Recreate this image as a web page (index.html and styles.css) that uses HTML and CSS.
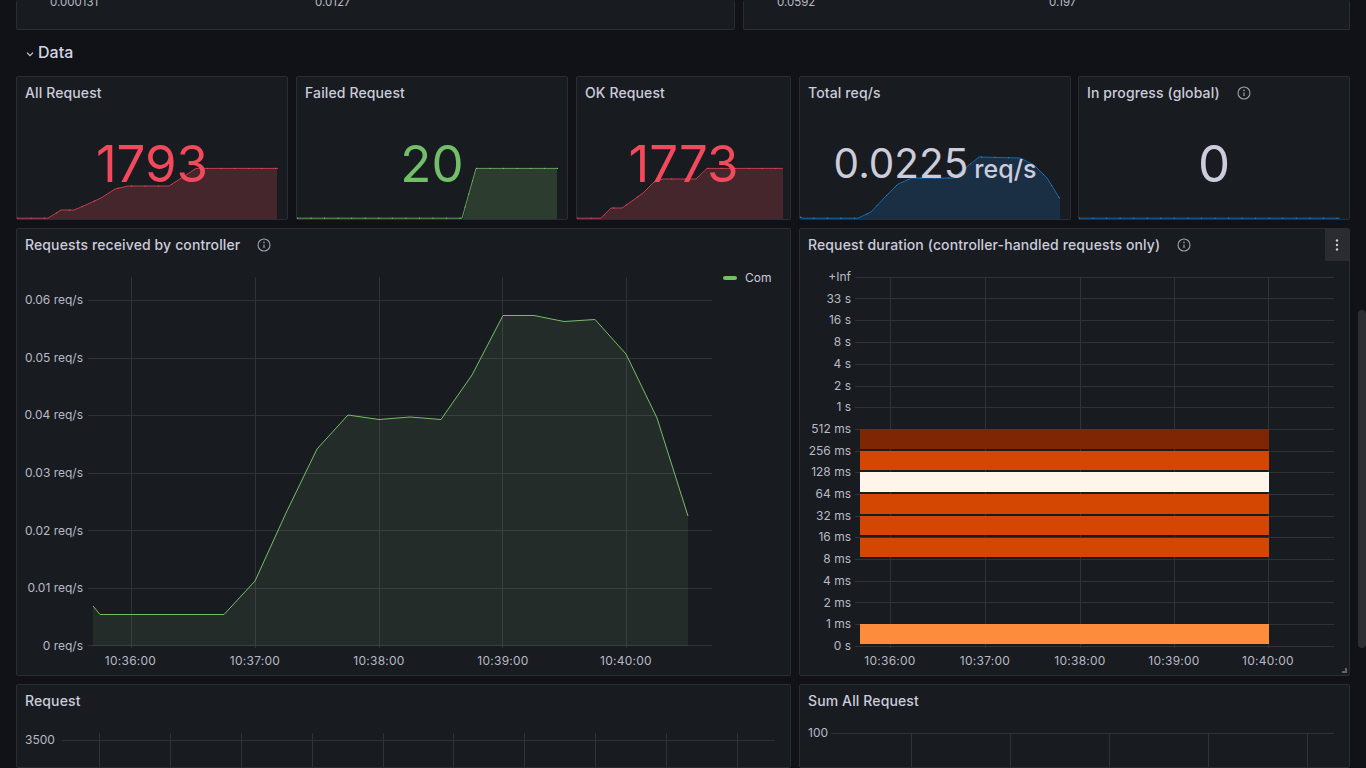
FILE: index.html
```html
<!DOCTYPE html>
<html lang="en">
<head>
<meta charset="utf-8">
<title>Grafana dashboard</title>
<link rel="stylesheet" href="styles.css">
</head>
<body>
<main class="dash">
  <div class="row row-top">
    <section class="panel clip"><span class="v v1">0.000131</span><span class="v v2">0.0127</span></section>
    <section class="panel clip"><span class="v v3">0.0592</span><span class="v v4">0.197</span></section>
  </div>
  <h2 class="section"><svg class="chev" viewBox="0 0 10 10"><path d="M2 3.6 5 6.6 8 3.6" fill="none" stroke="#ccccdc" stroke-width="1.2"/></svg>Data</h2>
  <div class="row row-stat">
    <section class="panel">
      <svg class="spark" viewBox="16 76 272 144"><path class="f-red" d="M17 219V218.200H48L61 210H74L88 204 101 198 115 189 128 186H169L183 177 196 168.400H277V219Z"/><path class="l-red" d="M17 218.200H48L61 210H74L88 204 101 198 115 189 128 186H169L183 177 196 168.400H278"/><path class="dots d-red" d="M17 218.200H48L61 210H74L88 204 101 198 115 189 128 186H169L183 177 196 168.400H278"/></svg>
      <h3 class="title">All Request</h3>
      <div class="big red">1793</div>
    </section>
    <section class="panel">
      <svg class="spark" viewBox="296 76 272 144"><path class="f-green" d="M463 219 476 168.400H557V219Z"/><path class="l-green" d="M297 218.200H462L476 168.400H558"/><path class="dots d-green" d="M297 218.200H462L476 168.400H558"/></svg>
      <h3 class="title">Failed Request</h3>
      <div class="big green">20</div>
    </section>
    <section class="panel">
      <svg class="spark" viewBox="576 76 215 144"><path class="f-red" d="M577 219V218.200H601L611 208H622L632 201 643 193 654 182 663 179H696L707 168.400H783V219Z"/><path class="l-red" d="M577 218.200H601L611 208H622L632 201 643 193 654 182 663 179H696L707 168.400H783"/><path class="dots d-red" d="M577 218.200H601L611 208H622L632 201 643 193 654 182 663 179H696L707 168.400H783"/></svg>
      <h3 class="title">OK Request</h3>
      <div class="big red">1773</div>
    </section>
    <section class="panel">
      <svg class="spark" viewBox="799 76 272 144"><path class="f-blue" d="M800 219V217L803 218.200H858L871 212 885 197 898 184 912 178H953L979 157 1020 158 1034 165 1047 178 1060 199V219Z"/><path class="l-blue" d="M800 217 803 218.200H858L871 212 885 197 898 184 912 178H953L979 157 1020 158 1034 165 1047 178 1060 199"/><path class="dots d-blue" d="M800 217 803 218.200H858L871 212 885 197 898 184 912 178H953L979 157 1020 158 1034 165 1047 178 1060 199"/></svg>
      <h3 class="title">Total req/s</h3>
      <div class="big grey mid">0.0225<span class="unit">req/s</span></div>
    </section>
    <section class="panel">
      <svg class="spark" viewBox="1078 76 272 144"><path class="l-blue" d="M1079 218.200H1340"/><path class="dots d-blue" d="M1079 218.200H1340"/></svg>
      <h3 class="title">In progress (global)<svg class="info" viewBox="0 0 14 14"><circle cx="7" cy="7" r="6" fill="none" stroke="#9fa0ac" stroke-width="1.1"/><circle cx="7" cy="4.4" r=".8" fill="#9fa0ac"/><path d="M7 6.5V10" stroke="#9fa0ac" stroke-width="1.2"/></svg></h3>
      <div class="big grey">0</div>
    </section>
  </div>
  <div class="row row-main">
    <section class="panel">
      <h3 class="title">Requests received by controller<svg class="info" viewBox="0 0 14 14"><circle cx="7" cy="7" r="6" fill="none" stroke="#9fa0ac" stroke-width="1.1"/><circle cx="7" cy="4.4" r=".8" fill="#9fa0ac"/><path d="M7 6.5V10" stroke="#9fa0ac" stroke-width="1.2"/></svg></h3>
      <svg class="chart" viewBox="16 228 775 448">
        <g class="grid">
          <path d="M131.500 277V648M255.500 277V648M379.500 277V648M502.500 277V648M626.500 277V648"/>
          <path d="M88 300.500H712M88 358.500H712M88 415.500H712M88 473.500H712M88 530.500H712M88 588.500H712M88 645.500H712"/>
        </g>
        <path class="f-chart" d="M93 646V606L100 614.500H224L255 581 286 513 317 449 348 415 379 419.500 410 417 441 419.500 472 375 503 315.500H534L564 321.500 595 319.500 626 354 657 418 688 516V646Z"/>
        <path class="l-chart" d="M93 606 100 614.500H224L255 581 286 513 317 449 348 415 379 419.500 410 417 441 419.500 472 375 503 315.500H534L564 321.500 595 319.500 626 354 657 418 688 516"/>
        <g class="axis end">
          <text x="83" y="304">0.06 req/s</text>
          <text x="83" y="362">0.05 req/s</text>
          <text x="83" y="419">0.04 req/s</text>
          <text x="83" y="477">0.03 req/s</text>
          <text x="83" y="535">0.02 req/s</text>
          <text x="83" y="592">0.01 req/s</text>
          <text x="83" y="650">0 req/s</text>
        </g>
        <g class="axis mid">
          <text x="130.500" y="665">10:36:00</text>
          <text x="255" y="665">10:37:00</text>
          <text x="379" y="665">10:38:00</text>
          <text x="503" y="665">10:39:00</text>
          <text x="626" y="665">10:40:00</text>
        </g>
        <rect class="leg" x="723" y="276" width="14" height="4" rx="2"/>
        <text class="legt" x="745" y="282">Com</text>
      </svg>
    </section>
    <section class="panel">
      <h3 class="title">Request duration (controller-handled requests only)<svg class="info" viewBox="0 0 14 14"><circle cx="7" cy="7" r="6" fill="none" stroke="#9fa0ac" stroke-width="1.1"/><circle cx="7" cy="4.4" r=".8" fill="#9fa0ac"/><path d="M7 6.5V10" stroke="#9fa0ac" stroke-width="1.2"/></svg></h3>
      <button class="menu" aria-label="Panel menu"><svg viewBox="0 0 4 14" width="4" height="14"><circle cx="2" cy="2.500" r="1.200"/><circle cx="2" cy="7" r="1.200"/><circle cx="2" cy="11.500" r="1.200"/></svg></button>
      <svg class="chart" viewBox="799 228 551 448">
        <g class="grid">
          <path d="M890.500 277V648M985.500 277V648M1080.500 277V648M1174.500 277V648M1268.500 277V648"/>
          <path d="M855 277.500H1334M855 298.500H1334M855 320.500H1334M855 342.500H1334M855 364.500H1334M855 386.500H1334M855 407.500H1334M855 429.500H1334M855 451.500H1334M855 472.500H1334M855 494.500H1334M855 516.500H1334M855 537.500H1334M855 559.500H1334M855 581.500H1334M855 602.500H1334M855 624.500H1334M855 646.500H1334"/>
        </g>
        <rect x="860" y="429" width="409" height="20" fill="#7f2704"/>
        <rect x="860" y="451" width="409" height="19" fill="#d34703"/>
        <rect x="860" y="472" width="409" height="20" fill="#fff5eb"/>
        <rect x="860" y="494" width="409" height="20" fill="#d34703"/>
        <rect x="860" y="516" width="409" height="19" fill="#d34703"/>
        <rect x="860" y="538" width="409" height="19" fill="#d34703"/>
        <rect x="860" y="624" width="409" height="20" fill="#fd8d3c"/>
        <g class="axis end">
          <text x="851" y="281">+Inf</text>
          <text x="851" y="303">33 s</text>
          <text x="851" y="324">16 s</text>
          <text x="851" y="346">8 s</text>
          <text x="851" y="368">4 s</text>
          <text x="851" y="390">2 s</text>
          <text x="851" y="411">1 s</text>
          <text x="851" y="433">512 ms</text>
          <text x="851" y="455">256 ms</text>
          <text x="851" y="476">128 ms</text>
          <text x="851" y="498">64 ms</text>
          <text x="851" y="520">32 ms</text>
          <text x="851" y="541">16 ms</text>
          <text x="851" y="563">8 ms</text>
          <text x="851" y="585">4 ms</text>
          <text x="851" y="607">2 ms</text>
          <text x="851" y="628">1 ms</text>
          <text x="851" y="650">0 s</text>
        </g>
        <g class="axis mid">
          <text x="890" y="665">10:36:00</text>
          <text x="985" y="665">10:37:00</text>
          <text x="1080" y="665">10:38:00</text>
          <text x="1174" y="665">10:39:00</text>
          <text x="1268" y="665">10:40:00</text>
        </g>
        <path class="resize" d="M1342 672H1346V668"/>
      </svg>
    </section>
  </div>
  <div class="row row-bottom">
    <section class="panel">
      <h3 class="title">Request</h3>
      <svg class="chart" viewBox="16 684 775 84">
        <g class="grid">
          <path d="M99.500 733V768M170.500 733V768M241.500 733V768M312.500 733V768M383.500 733V768M453.500 733V768M524.500 733V768M595.500 733V768M666.500 733V768M737.500 733V768"/>
          <path d="M62 740.500H775"/>
        </g>
        <text class="axis-t" x="25" y="744">3500</text>
      </svg>
    </section>
    <section class="panel">
      <h3 class="title">Sum All Request</h3>
      <svg class="chart" viewBox="799 684 551 84">
        <g class="grid">
          <path d="M911.500 733V768M1010.500 733V768M1109.500 733V768M1208.500 733V768M1307.500 733V768"/>
          <path d="M831 733.500H1334"/>
        </g>
        <text class="axis-t" x="808" y="737">100</text>
      </svg>
    </section>
  </div>
</main>
<div class="thumb"></div>
</body>
</html>
```
FILE: styles.css
```css
* { box-sizing: border-box; }
html, body { margin: 0; height: 768px; overflow: hidden; background: #111217; }
body { font-family: Inter, "Noto Sans", sans-serif; color: #ccccdc; }
.dash { width: 1350px; padding-left: 16px; display: flex; flex-direction: column; }
.row { display: flex; gap: 8px; flex: none; }
.row-top { height: 30px; }
.row-top .panel:first-child { width: 719px; }
.row-top .panel:last-child { width: 607px; }
.panel { position: relative; background: #181b1f; border: 1px solid #2a2d33; border-radius: 2px; overflow: hidden; }
.clip { border-top: 0; }
.v { position: absolute; top: -5px; font-size: 11.5px; line-height: 14px; color: #b9bac6; }
.v1 { left: 33px; } .v2 { left: 298px; } .v3 { left: 33px; } .v4 { left: 305px; }
.section { display: flex; align-items: center; height: 44px; margin: 0 0 2px; padding-left: 9px; font-size: 16px; line-height: 44px; font-weight: 500; color: #d5d5e3; }
.chev { width: 10px; height: 10px; margin-right: 3px; margin-top: 3px; }
.row-stat { height: 144px; gap: 8px; }
.row-stat .panel { width: 272px; }
.row-stat .panel:nth-child(3) { width: 215px; }
.row-stat .panel:nth-child(5) { margin-left: -1px; }
.row-main { height: 448px; margin-top: 8px; }
.row-main .panel, .row-bottom .panel { width: 775px; }
.row-main .panel:last-child, .row-bottom .panel:last-child { width: 551px; }
.row-bottom { height: 84px; margin-top: 8px; }
.title { position: relative; z-index: 1; display: flex; align-items: center; height: 32px; margin: 0; padding-left: 8px; font-size: 14px; font-weight: 500; line-height: 32px; letter-spacing: .12px; color: #ccccdc; }
.info { width: 14px; height: 14px; margin-left: 17px; }
.spark, .chart { position: absolute; left: -1px; top: -1px; display: block; width: calc(100% + 2px); height: calc(100% + 2px); }
.big { position: absolute; z-index: 1; left: 0; right: 0; top: 57px; text-align: center; font-size: 51px; line-height: 60px; font-weight: 400; }
.big.mid { font-size: 40.5px; }
.unit { font-size: 25px; margin-left: 6px; font-weight: 500; }
.red { color: #f2495c; } .green { color: #73bf69; } .grey { color: #ccccdc; }
.f-red { fill: #46262d; } .l-red { fill: none; stroke: #c23c4c; stroke-width: 1; }
.f-green { fill: #2c3d2f; } .l-green { fill: none; stroke: #5fa356; stroke-width: 1; }
.f-blue { fill: #1a2f44; } .l-blue { fill: none; stroke: #1a68aa; stroke-width: 1; }
.dots { fill: none; stroke-width: 1; stroke-dasharray: 1 12.55; }
.d-red { stroke: #f2495c; } .d-green { stroke: #8fd085; } .d-blue { stroke: #3f8fd4; }
.grid path { fill: none; stroke: #2f3237; stroke-width: 1; }
.f-chart { fill: #90c58d; fill-opacity: .1; } .l-chart { fill: none; stroke: #73bf69; stroke-width: 1; }
.axis text, .axis-t { font-family: Inter, "Noto Sans", sans-serif; font-size: 12px; fill: #b9bac6; }
.axis.end text { text-anchor: end; }
.axis.mid text { text-anchor: middle; letter-spacing: .25px; }
.leg { fill: #73bf69; }
.legt { font-family: Inter, "Noto Sans", sans-serif; font-size: 12px; fill: #ccccdc; }
.resize { fill: none; stroke: #64656c; stroke-width: 2; }
.menu { position: absolute; z-index: 2; right: 0; top: 0; width: 24px; height: 32px; padding: 0; border: 0; display: flex; align-items: center; justify-content: center; background: #2a2c31; fill: #ccccdc; }
.thumb { position: absolute; left: 1358px; top: 310px; width: 8px; height: 338px; border-radius: 4px; background: #2c2e33; }
```
